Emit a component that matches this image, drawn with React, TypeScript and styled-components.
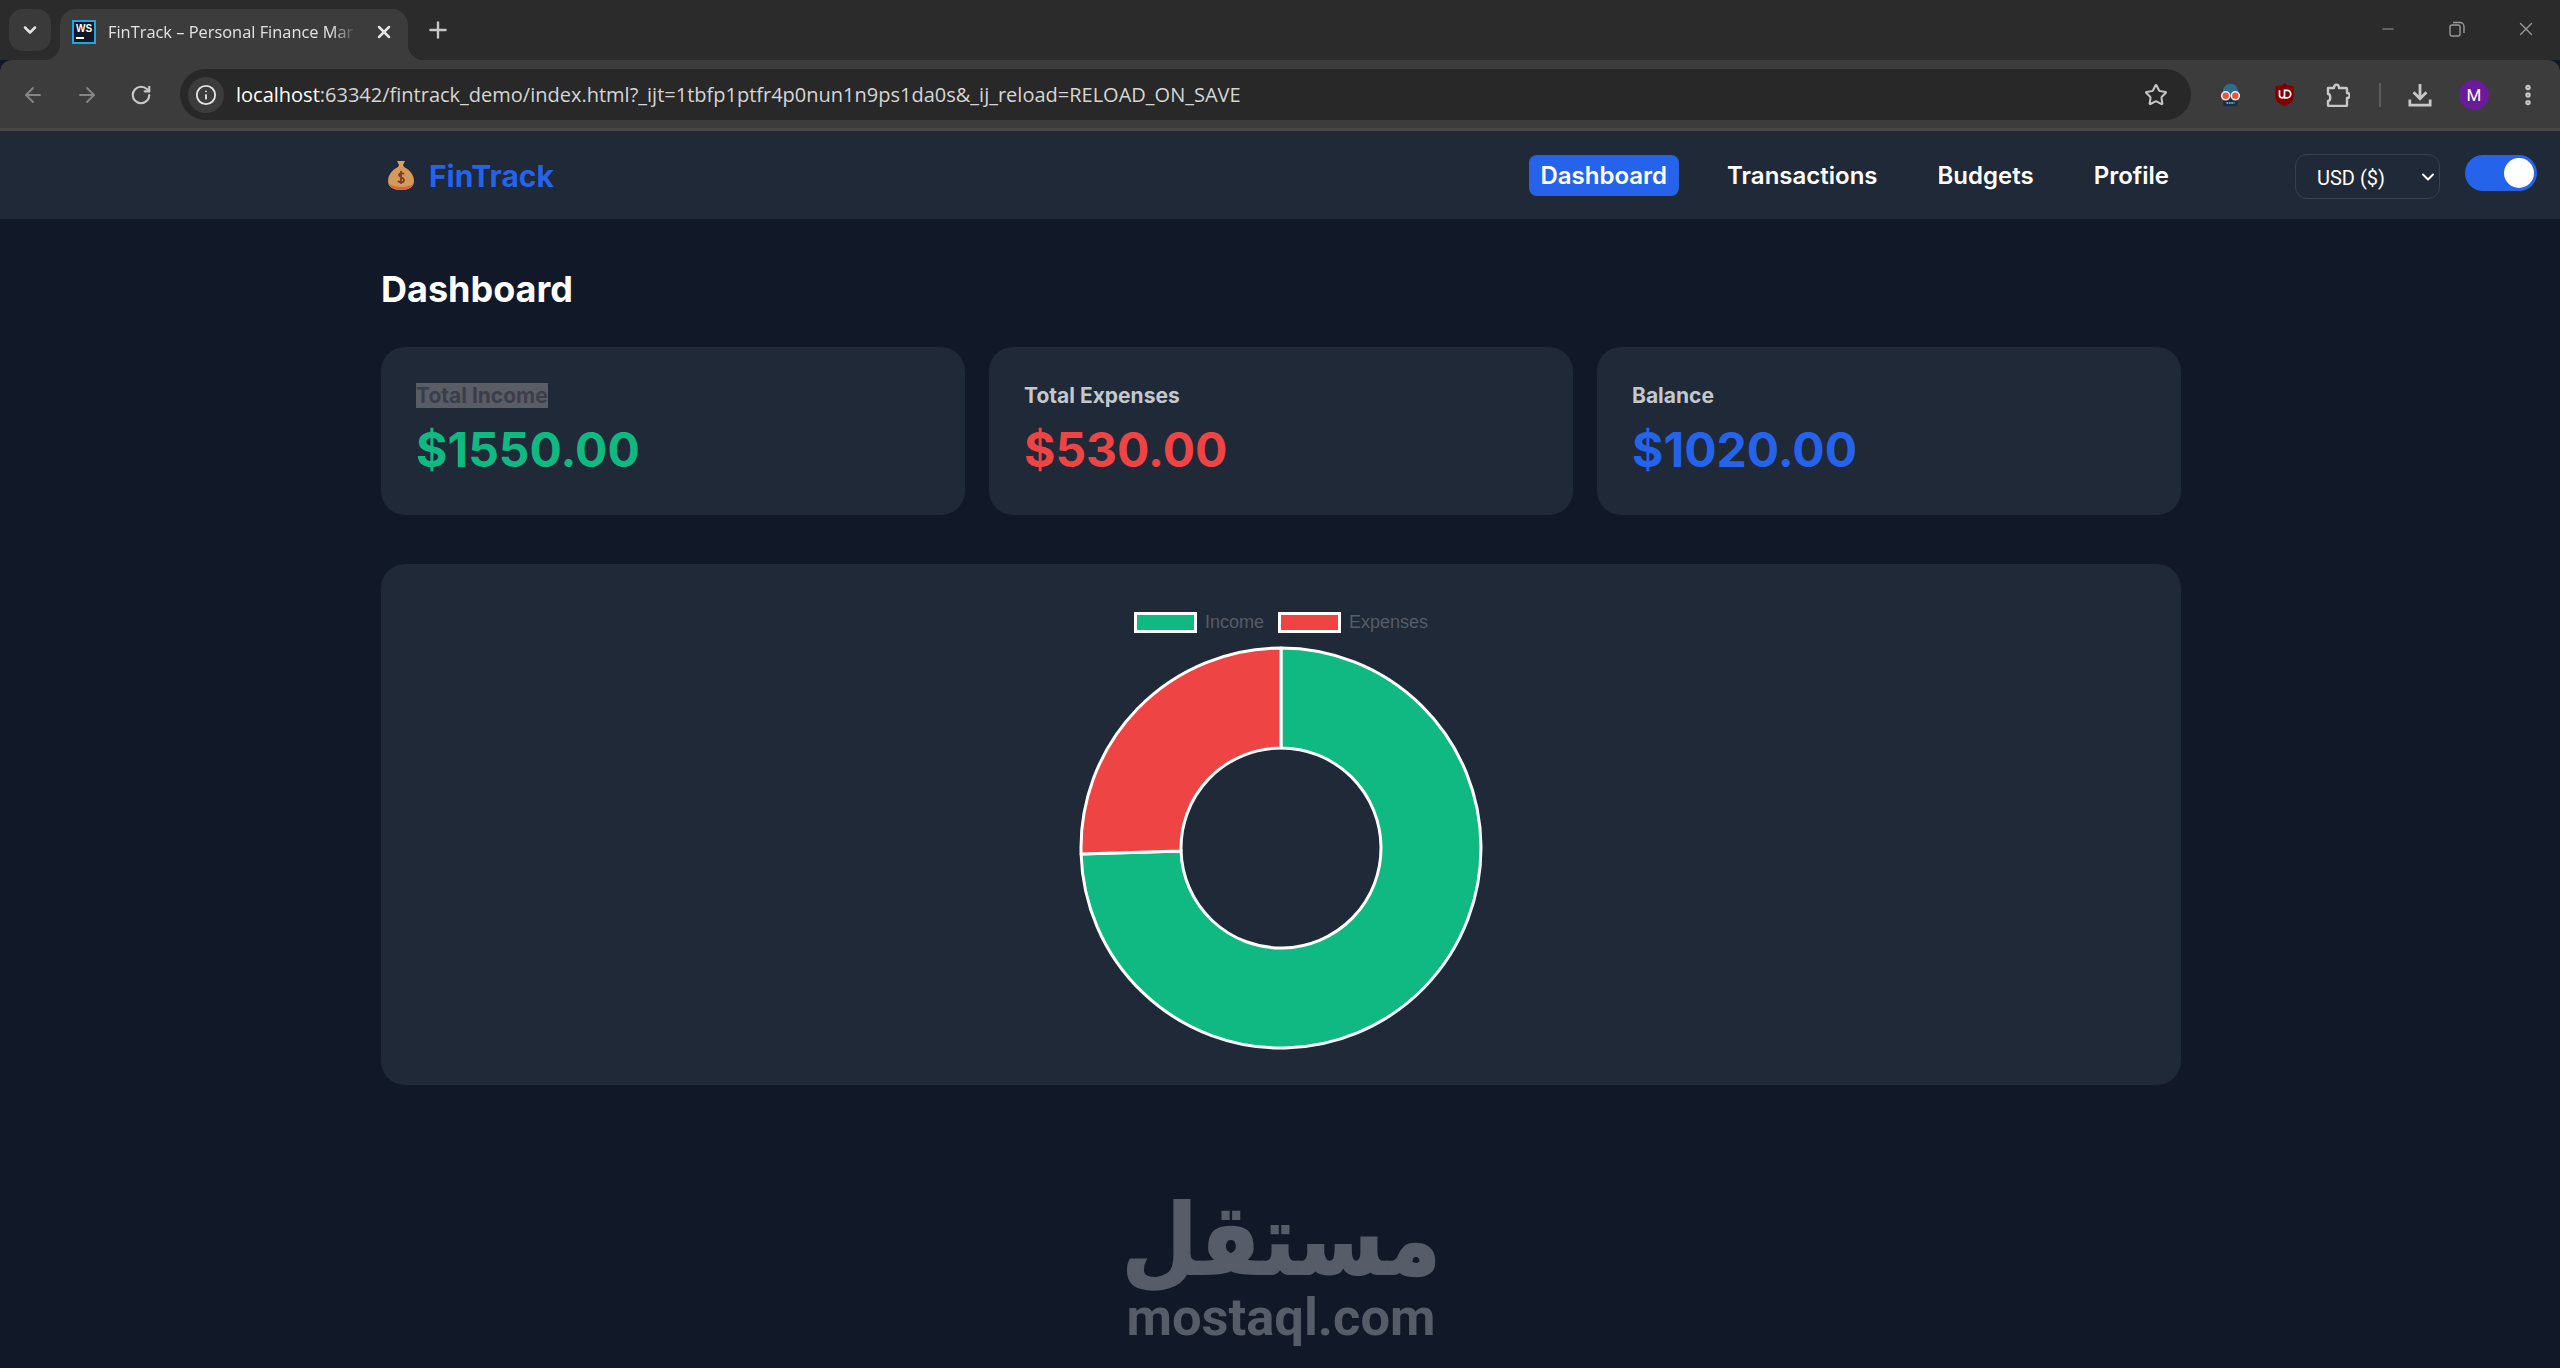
import React from 'react';
import styled, { createGlobalStyle } from 'styled-components';
import { ArrowLeft, ArrowRight, ChevronDown, Info, Minus, MoreVertical, Plus, RotateCw, Star, X } from 'lucide-react';

const GlobalStyle = createGlobalStyle`
  html, body {
    margin: 0;
    padding: 0;
    background: #111827;
  }
  * {
    box-sizing: border-box;
  }
`;

// ========= Browser chrome =========
const Page = styled.div`
  width: 2560px;
  height: 1368px;
  overflow: hidden;
  font-family: 'Inter', sans-serif;
  background: #111827;
`;

const TabStrip = styled.div`
  height: 60px;
  background: #2b2b2b;
  display: flex;
  align-items: flex-end;
  padding-left: 9px;
`;

const TabListButton = styled.div`
  width: 42px;
  height: 42px;
  margin-bottom: 9px;
  border-radius: 14px;
  background: #3a3a3a;
  color: #e3e3e3;
  display: flex;
  align-items: center;
  justify-content: center;
`;

const Tab = styled.div`
  position: relative;
  width: 348px;
  height: 51px;
  margin-left: 9px;
  padding: 0 14px 6px 12px;
  background: #3c3c3c;
  border-radius: 16px 16px 0 0;
  display: flex;
  align-items: center;
  gap: 12px;
  color: #e3e3e3;

  &::before,
  &::after {
    content: '';
    position: absolute;
    bottom: 0;
    width: 16px;
    height: 16px;
  }
  &::before {
    left: -16px;
    background: radial-gradient(circle at 0 0, transparent 16px, #3c3c3c 16.5px);
  }
  &::after {
    right: -16px;
    background: radial-gradient(circle at 100% 0, transparent 16px, #3c3c3c 16.5px);
  }
`;

const Favicon = styled.div`
  width: 24px;
  height: 24px;
  flex: none;
  background: #0f1626;
  border: 2px solid #1ea7e0;
  color: #fff;
  font: 700 10px/11px 'Liberation Sans', sans-serif;
  padding: 1px 0 0 2px;
  display: flex;
  flex-direction: column;
  gap: 3px;

  i {
    display: block;
    width: 8px;
    height: 2px;
    background: #fff;
  }
`;

const TabTitle = styled.div`
  flex: 1;
  white-space: nowrap;
  font: 400 16.4px 'Open Sans', sans-serif;
  -webkit-mask-image: linear-gradient(to right, #000 88%, transparent 98%);
  mask-image: linear-gradient(to right, #000 88%, transparent 98%);
`;

const NewTab = styled.div`
  margin: 0 0 17px 17px;
  color: #c7c7c7;
  display: flex;
`;

const WindowControls = styled.div`
  margin-left: auto;
  align-self: flex-start;
  height: 60px;
  display: flex;
  color: #9a9a9a;
`;

const WindowButton = styled.div`
  width: 69px;
  display: flex;
  align-items: center;
  justify-content: center;
  padding-bottom: 2px;
`;

const Toolbar = styled.div`
  height: 71px;
  background: #3c3c3c;
  border-bottom: 3px solid #474747;
  border-radius: 12px 12px 0 0;
  display: flex;
  align-items: center;
  padding: 1px 5px 0 6px;
`;

const ToolButton = styled.div<{ $dim?: boolean }>`
  width: 54px;
  flex: none;
  display: flex;
  align-items: center;
  justify-content: center;
  color: ${(p) => (p.$dim ? '#858585' : '#c7c7c7')};
`;

const AddressBar = styled.div`
  flex: 1;
  height: 51px;
  margin: 0 12px;
  border-radius: 26px;
  background: #282828;
  display: flex;
  align-items: center;
  padding: 0 23px 0 8px;
  color: #c7c7c7;
`;

const InfoChip = styled.div`
  width: 36px;
  height: 36px;
  border-radius: 50%;
  background: #3c3c3c;
  color: #e3e3e3;
  display: flex;
  align-items: center;
  justify-content: center;
`;

const Url = styled.div`
  flex: 1;
  margin-left: 12px;
  font: 400 20px 'Open Sans', sans-serif;
  white-space: nowrap;
  color: #d5d5d5;

  b {
    font-weight: 400;
    color: #fff;
  }
`;

const ToolbarDivider = styled.div`
  width: 2px;
  height: 24px;
  margin: 0 12px 0 14px;
  background: #5c5c5c;
`;

const Avatar = styled.div`
  width: 30px;
  height: 30px;
  border-radius: 50%;
  background: #6a1b9a;
  color: #fff;
  font: 400 17px/30px 'Roboto', sans-serif;
  text-align: center;
`;

// ========= App header =========
const Header = styled.header`
  height: 88px;
  background: #1f2937;
  display: grid;
  grid-template-columns: 381px 1800px 1fr;
  align-items: center;
`;

const HeaderInner = styled.div`
  grid-column: 2;
  display: flex;
  align-items: center;
  justify-content: space-between;
`;

const Logo = styled.div`
  display: flex;
  align-items: center;
  gap: 15px;
  padding-left: 7px;
  font-size: 30px;
  line-height: 38px;
  font-weight: 700;
  color: #2563eb;

  span {
    padding-top: 2px;
  }
`;

const NavLinks = styled.nav`
  display: flex;
  align-items: center;
  gap: 36px;
`;

const NavLink = styled.a<{ $active?: boolean }>`
  height: 41px;
  padding: 0 12px;
  border-radius: 8px;
  font-size: 24px;
  font-weight: 600;
  line-height: 41px;
  color: #fff;
  background: ${(p) => (p.$active ? '#2563eb' : 'transparent')};
`;

const HeaderTools = styled.div`
  grid-column: 3;
  display: flex;
  align-items: center;
  gap: 25px;
  padding-left: 114px;
`;

const CurrencySelect = styled.div`
  position: relative;
  width: 145px;
  height: 45px;
  margin-top: 3px;
  color: #fff;

  svg {
    position: absolute;
    right: 2px;
    top: 13px;
    pointer-events: none;
  }
`;

const CurrencyField = styled.select`
  appearance: none;
  width: 100%;
  height: 100%;
  padding: 2px 0 0 21px;
  background: #1f2937;
  border: 1px solid #374151;
  border-radius: 12px;
  color: #fff;
  font: 400 20px 'Roboto', sans-serif;
`;

const Toggle = styled.div`
  width: 72px;
  height: 36px;
  margin-top: -5px;
  padding: 3px 3px 3px 0;
  border-radius: 18px;
  background: #2563eb;
  display: flex;
  justify-content: flex-end;

  i {
    display: block;
    width: 30px;
    height: 30px;
    border-radius: 50%;
    background: #fff;
  }
`;

// ========= Dashboard =========
const Main = styled.main`
  width: 1800px;
  margin-left: 381px;
  padding-top: 50px;
`;

const Title = styled.h1`
  margin: 0 0 38px;
  font-size: 36px;
  line-height: 40px;
  font-weight: 700;
  color: #fff;
`;

const Cards = styled.div`
  display: grid;
  grid-template-columns: repeat(3, 1fr);
  gap: 24px;
  margin-bottom: 49px;
`;

const Card = styled.section`
  height: 168px;
  padding: 36px 36px 36px 35px;
  border-radius: 24px;
  background: #1f2937;
`;

const CardLabel = styled.div`
  font-size: 21px;
  line-height: 25px;
  font-weight: 700;
  color: #c3c7ce;
`;

const Selected = styled.span`
  background: #5a5d66;
  color: #3b3e49;
`;

const CardValue = styled.div<{ $color: string }>`
  margin-top: 10px;
  font-size: 48px;
  line-height: 63px;
  font-weight: 700;
  color: ${(p) => p.$color};
`;

const ChartCard = styled.section`
  height: 521px;
  padding-top: 48px;
  border-radius: 24px;
  background: #1f2937;
  display: flex;
  flex-direction: column;
  align-items: center;
`;

const Legend = styled.div`
  display: flex;
  gap: 14px;
  height: 21px;
  margin-bottom: 13px;
  font: 400 18px/21px 'Liberation Sans', Arial, sans-serif;
  color: #565c68;
`;

const LegendItem = styled.div`
  display: flex;
  align-items: center;
  gap: 8px;
`;

const Swatch = styled.span<{ $color: string }>`
  width: 63px;
  height: 21px;
  border: 3px solid #fff;
  background: ${(p) => p.$color};
`;

const Watermark = styled.div`
  margin-top: 103px;
  display: flex;
  flex-direction: column;
  align-items: center;
  color: #565c68;
`;

const WatermarkArabic = styled.div`
  font: 700 98px/104px 'DejaVu Sans', sans-serif;
  direction: rtl;
  transform: scaleX(0.89);
  -webkit-text-stroke: 2px #565c68;
`;

const WatermarkLatin = styled.div`
  font: 700 52.500px/50px 'Roboto', sans-serif;
`;

// ========= Drawings =========
const MoneyBag: React.FC = () => (
  <svg width="26" height="30" viewBox="0 0 26 30">
    <path d="M9 1h8l-2 4 1 2H10l1-2z" fill="#d9a066" />
    <path d="M10 7h6c6 3 10 8 10 14 0 6-5 9-13 9S0 27 0 21C0 15 4 10 10 7z" fill="#d39a5b" />
    <path d="M1 24c2 4 6 6 12 6s10-2 12-6c-3 2-7 3-12 3s-9-1-12-3z" fill="#d8653f" />
    <path d="M16 14c-1-1-5-1-5 1s5 2 5 5-4 3-6 1M13 11v13" fill="none" stroke="#7a3f22" strokeWidth="1.8" />
  </svg>
);

const SpyBot: React.FC = () => (
  <svg width="23" height="24" viewBox="0 0 26 30">
    <path d="M3 13C3 5 8 1 13 1s10 4 10 12z" fill="#2b6e8f" />
    <rect x="4" y="18" width="18" height="11" rx="2" fill="#123049" />
    <circle cx="7" cy="16" r="5" fill="#e9553a" stroke="#eee" strokeWidth="2" />
    <circle cx="19" cy="16" r="5" fill="#e9553a" stroke="#eee" strokeWidth="2" />
    <path d="M8 25h10" stroke="#9cc" strokeWidth="2" strokeDasharray="2 1" />
  </svg>
);

const Shield: React.FC = () => (
  <svg width="21" height="25" viewBox="0 0 24 30">
    <path d="M12 1l3 3 8 1v13c0 5-5 9-11 11C6 27 1 23 1 18V5l8-1z" fill="#800000" />
    <path d="M6 10v6a3 3 0 0 0 6 0v-6M12 10h3a4 4 0 0 1 0 9h-3z" fill="none" stroke="#fff" strokeWidth="2" />
  </svg>
);

const ExtensionPiece: React.FC = () => (
  <svg width="24" height="24" viewBox="0 0 24 24" fill="none" stroke="#c7c7c7" strokeWidth="2.4" strokeLinejoin="round">
    <path d="M2 5h6c0-4.500 5-4.500 5 0h7a1 1 0 0 1 1 1v4c3.500 0 3.500 5 0 5v7a1 1 0 0 1-1 1H3a1 1 0 0 1-1-1v-4c3 0 3-7 0-7z" />
  </svg>
);

const DownloadTray: React.FC = () => (
  <svg width="24" height="24" viewBox="0 0 26 26" fill="none" stroke="#c7c7c7" strokeWidth="3">
    <path d="M13 1v15M6 10l7 7 7-7" />
    <path d="M2 18v6h22v-6" />
  </svg>
);

const RestoreIcon: React.FC = () => (
  <svg width="16" height="16" viewBox="0 0 16 16" fill="none" stroke="currentColor" strokeWidth="1.4">
    <rect x="1" y="4" width="10" height="11" rx="2" />
    <path d="M4 1.500h7a4 4 0 0 1 4 4V12" />
  </svg>
);

// Donut with the same numbers as the stat cards, drawn clockwise from the top
const Donut: React.FC<{ income: number; expenses: number }> = ({ income, expenses }) => {
  const angle = (income / (income + expenses)) * 2 * Math.PI;
  const point = (r: number) => [202 + r * Math.sin(angle), 202 - r * Math.cos(angle)].map((n) => n.toFixed(2)).join(' ');
  const green = `M202 2A200 200 0 1 1 ${point(200)}L${point(100)}A100 100 0 1 0 202 102Z`;
  const red = `M${point(200)}A200 200 0 0 1 202 2L202 102A100 100 0 0 0 ${point(100)}Z`;
  return (
    <svg width="404" height="404" viewBox="0 0 404 404">
      <path d={green} fill="#10b981" stroke="#fff" strokeWidth="3" strokeLinejoin="round" />
      <path d={red} fill="#ef4444" stroke="#fff" strokeWidth="3" strokeLinejoin="round" />
    </svg>
  );
};

// ========= Page =========
const App: React.FC = () => (
  <Page>
    <GlobalStyle />
    <TabStrip>
      <TabListButton>
        <ChevronDown size={20} strokeWidth={3} />
      </TabListButton>
      <Tab>
        <Favicon>
          WS
          <i />
        </Favicon>
        <TabTitle>FinTrack – Personal Finance Mar</TabTitle>
        <X size={20} strokeWidth={3} />
      </Tab>
      <NewTab>
        <Plus size={26} strokeWidth={2.2} />
      </NewTab>
      <WindowControls>
        <WindowButton>
          <Minus size={18} strokeWidth={1.5} />
        </WindowButton>
        <WindowButton>
          <RestoreIcon />
        </WindowButton>
        <WindowButton>
          <X size={22} strokeWidth={1.5} />
        </WindowButton>
      </WindowControls>
    </TabStrip>

    <Toolbar>
      <ToolButton $dim>
        <ArrowLeft size={24} strokeWidth={1.8} />
      </ToolButton>
      <ToolButton $dim>
        <ArrowRight size={24} strokeWidth={1.8} />
      </ToolButton>
      <ToolButton>
        <RotateCw size={22} strokeWidth={2.4} />
      </ToolButton>
      <AddressBar>
        <InfoChip>
          <Info size={22} strokeWidth={2} />
        </InfoChip>
        <Url>
          <b>localhost</b>:63342/fintrack_demo/index.html?_ijt=1tbfp1ptfr4p0nun1n9ps1da0s&amp;_ij_reload=RELOAD_ON_SAVE
        </Url>
        <Star size={24} strokeWidth={2} />
      </AddressBar>
      <ToolButton>
        <SpyBot />
      </ToolButton>
      <ToolButton>
        <Shield />
      </ToolButton>
      <ToolButton>
        <ExtensionPiece />
      </ToolButton>
      <ToolbarDivider />
      <ToolButton>
        <DownloadTray />
      </ToolButton>
      <ToolButton>
        <Avatar>M</Avatar>
      </ToolButton>
      <ToolButton>
        <MoreVertical size={26} strokeWidth={3} />
      </ToolButton>
    </Toolbar>

    <Header>
      <HeaderInner>
        <Logo>
          <MoneyBag />
          <span>FinTrack</span>
        </Logo>
        <NavLinks>
          <NavLink $active>Dashboard</NavLink>
          <NavLink>Transactions</NavLink>
          <NavLink>Budgets</NavLink>
          <NavLink>Profile</NavLink>
        </NavLinks>
      </HeaderInner>
      <HeaderTools>
        <CurrencySelect>
          <CurrencyField defaultValue="USD">
            <option value="USD">USD ($)</option>
          </CurrencyField>
          <ChevronDown size={20} strokeWidth={2.4} />
        </CurrencySelect>
        <Toggle>
          <i />
        </Toggle>
      </HeaderTools>
    </Header>

    <Main>
      <Title>Dashboard</Title>
      <Cards>
        <Card>
          <CardLabel>
            <Selected>Total Income</Selected>
          </CardLabel>
          <CardValue $color="#10b981">$1550.00</CardValue>
        </Card>
        <Card>
          <CardLabel>Total Expenses</CardLabel>
          <CardValue $color="#ef4444">$530.00</CardValue>
        </Card>
        <Card>
          <CardLabel>Balance</CardLabel>
          <CardValue $color="#2563eb">$1020.00</CardValue>
        </Card>
      </Cards>
      <ChartCard>
        <Legend>
          <LegendItem>
            <Swatch $color="#10b981" />
            Income
          </LegendItem>
          <LegendItem>
            <Swatch $color="#ef4444" />
            Expenses
          </LegendItem>
        </Legend>
        <Donut income={1550} expenses={530} />
      </ChartCard>
      <Watermark>
        <WatermarkArabic>مستقل</WatermarkArabic>
        <WatermarkLatin>mostaql.com</WatermarkLatin>
      </Watermark>
    </Main>
  </Page>
);

export default App;
